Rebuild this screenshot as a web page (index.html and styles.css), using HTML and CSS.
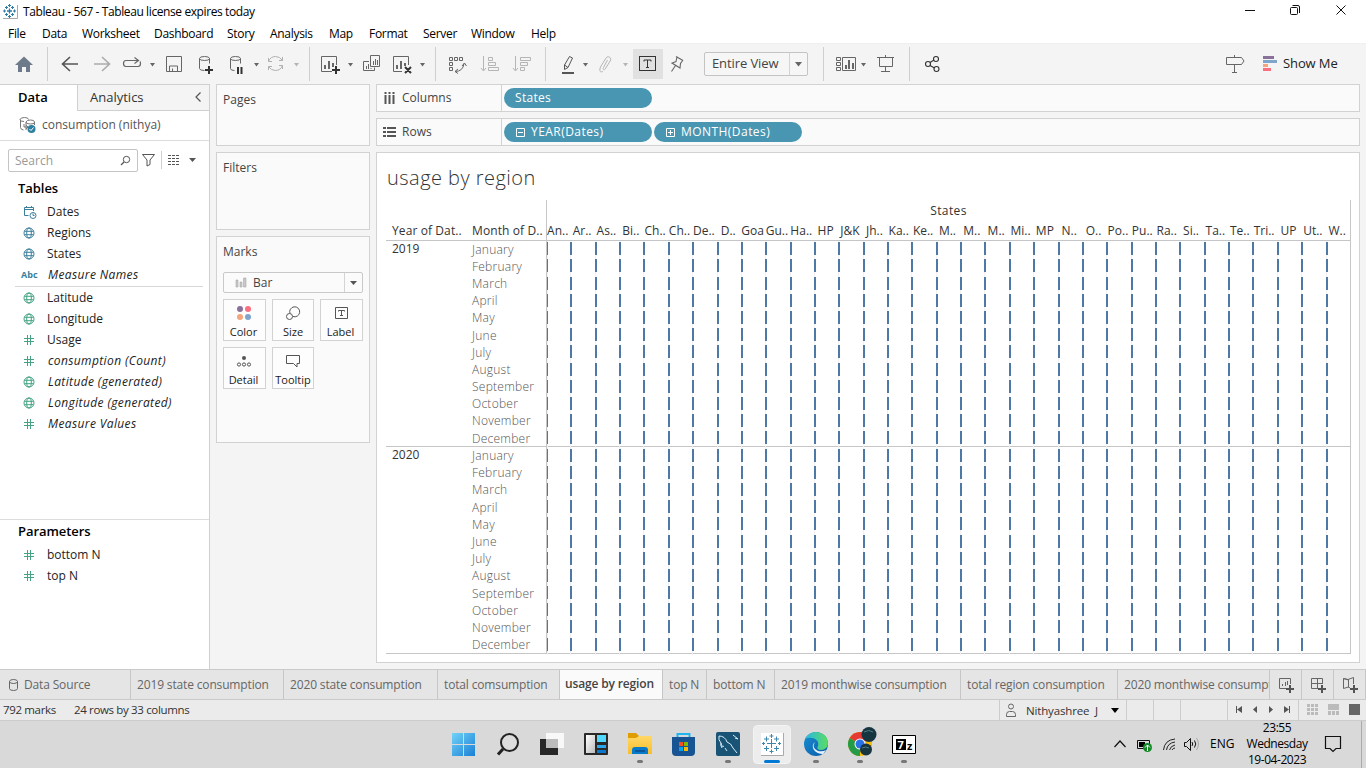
FILE: index.html
```html
<!DOCTYPE html>
<html lang="en">
<head>
<meta charset="utf-8">
<title>Tableau - 567</title>
<link rel="stylesheet" href="styles.css">
</head>
<body>
<svg class="defs" width="0" height="0">
  <symbol id="globe" viewBox="0 0 12 12"><g fill="none" stroke="currentColor"><circle cx="6" cy="6" r="5"/><ellipse cx="6" cy="6" rx="2.3" ry="5"/><path d="M1.5 4.3h9M1.5 7.7h9"/></g></symbol>
  <symbol id="hash" viewBox="0 0 12 12"><path d="M4.5 1v10M7.5 1v10M1 4.5h10M1 7.5h10" fill="none" stroke="currentColor"/></symbol>
  <symbol id="cal" viewBox="0 0 14 14"><g fill="none" stroke="currentColor"><path d="M5.500 10.500H1.500v-8h9V6M1 4.500h10M3.500 1v2M8.500 1v2"/><circle cx="10" cy="10.500" r="3"/><path d="M10 8.500v2h1.500"/></g></symbol>
</svg>
<div class="app">
  <header class="titlebar">
    <svg class="logo" width="18" height="19" viewBox="0 0 18 19"><path d="M3 18.500h14.500V5" fill="none" stroke="#aaa"/><path d="M3 4h14v14H3z" fill="#fff"/><g stroke="#2e7ba3" fill="none"><path stroke-width="1.300" d="M9.500 8.500v5M7 11h5"/><path d="M9.500 4v3M8 5.500h3M9.500 15v3M8 16.500h3M4.500 9.500v3M3 11h3M14.500 9.500v3M13 11h3M6.500 6v3M5 7.500h3M12.500 6v3M11 7.500h3M6.500 13v3M5 14.500h3M12.500 13v3M11 14.500h3"/></g></svg>
    <span class="window-title">Tableau - 567 - Tableau license expires today</span>
    <svg class="window-buttons" width="136" height="23" viewBox="1230 0 136 23"><g fill="none" stroke="#111"><path d="M1245 10.500h10"/><rect x="1290.500" y="7.500" width="7" height="7" rx="1"/><path d="M1292.500 5.500h5.500q1.500 0 1.500 1.500v6"/><path d="M1336.500 5.500l9 9M1345.500 5.500l-9 9"/></g></svg>
  </header>
  <nav class="menu"><span>File</span><span>Data</span><span>Worksheet</span><span>Dashboard</span><span>Story</span><span>Analysis</span><span>Map</span><span>Format</span><span>Server</span><span>Window</span><span>Help</span></nav>

  <div class="toolbar">
    <svg width="56" height="41" viewBox="0 43 56 41"><path d="M15 65l9-8.500 9 8.500h-3v7h-4v-5h-4v5h-4v-7z" fill="#6d7a8a"/><path class="sep" d="M47.500 47v34"/></svg>
    <svg width="104" height="41" viewBox="56 43 104 41"><g fill="none"><path d="M78 64H63M70 57l-7.500 7 7.500 7" stroke="#555" stroke-width="1.600"/><path d="M94 64h15M102 57l7.500 7-7.500 7" stroke="#aaa" stroke-width="1.600"/><path d="M138 60.500h-12q-2.500 0-2.500 3t2.500 3h12q2.500 0 2.500-3 0-1.500-.5-2M134.500 57.500l4 3-4 3" stroke="#666" stroke-width="1.200"/></g><path class="caret" d="M150 63h5l-2.500 3.500z"/></svg>
    <svg width="149" height="41" viewBox="160 43 149 41"><g fill="none" stroke="#666"><path d="M166.500 56.500h15v15h-15zM169.500 71v-5h8v5M172.500 71v-2.500"/><path d="M199.500 58.500q0-2 5-2t5 2-5 2-5-2zv10q0 2 5 2M209.500 58.500v5M230.500 58.500q0-2 5-2t5 2-5 2-5-2zv10q0 2 4 2M240.500 58.500v5"/></g><path d="M205 70h8M209 66v8" stroke="#333" stroke-width="2"/><path d="M238 67v7M241.500 67v7" stroke="#333" stroke-width="2"/><path class="caret" d="M254 63h5l-2.500 3.500z"/><path d="M268.500 61.500q2-5 7-5 4.500 0 7 4M282.500 65.500q-2 5-7 5-4.500 0-7-4M268.500 58v3.500h3.500M279 60.500h3.500V57M282.500 69v-3.500H279M268.500 70v-3.500h3.500" fill="none" stroke="#b0b0b0"/><path class="caret off" d="M294 63h5l-2.500 3.500z"/></svg>
    <svg width="126" height="41" viewBox="309 43 126 41"><path class="sep" d="M309.500 47v34"/><g fill="none" stroke="#666"><path d="M332 71.500h-10.500v-15h15V65M369 61.500h-5.500v9h11v-3M370.500 55.500h9v11h-9zM366.500 66v3M368.500 64v5M371 68v1M402 71.500h-8.500v-15h15V65"/></g><path d="M324 65h2v4h-2zM328 61h2v8h-2zM332 63h2v4h-2zM373 61h1v4h-1zM375 59h1v6h-1zM377 60h1v5h-1zM396 65h2v4h-2zM400 61h2v8h-2zM404 63h2v3h-2z" fill="#666"/><path d="M332 70h8M336 66v8M405 67l6 6M411 67l-6 6" stroke="#333" stroke-width="2"/><path class="caret" d="M348 63h5l-2.500 3.500zM420 63h5l-2.500 3.500z"/></svg>
    <svg width="110" height="41" viewBox="435 43 110 41"><path class="sep" d="M435.500 47v34"/><g fill="none" stroke="#666"><path d="M449.500 57.500h3v3h-3zM454.500 57.500h3v3h-3zM459.500 57.500h3v3h-3zM449.500 62.500h3v3h-3zM449.500 67.500h3v3h-3zM455 71.500q8 0 9-8M462 66l2.500-3 2 3M458 69l-3 2.500 3 2"/></g><g fill="none" stroke="#b5b5b5"><path d="M483.500 56v14M481 68l2.500 3 2.500-3M488.500 57.500h4v3h-4zM488.500 62.500h7v3h-7zM488.500 67.500h10v3h-10zM515.500 56v14M513 68l2.500 3 2.500-3M520.500 57.500h10v3h-10zM520.500 62.500h7v3h-7zM520.500 67.500h4v3h-4z"/></g></svg>
    <svg width="88" height="41" viewBox="545 43 88 41"><path class="sep" d="M545.500 47v34"/><path d="M569.500 56.500l3 1.500-4.500 9.500-3.500 2v-4.500zM564.500 65l3.500 2.500" fill="none" stroke="#555"/><path d="M562 73h12" stroke="#555" stroke-width="2"/><path class="caret" d="M583 63h5l-2.500 3.500z"/><path d="M607.500 60l-4 7.500c-1 2 .5 3 1.700 1.500l5-8c2-3-2-6-4.200-3l-5.500 9c-2 5 1 6 2.500 4" fill="none" stroke="#b5b5b5"/><path class="caret off" d="M623 63h5l-2.500 3.500z"/></svg>
    <svg width="71" height="41" viewBox="633 43 71 41"><path d="M633 49h30v30h-30z" fill="#e1e1e1"/><rect x="639.500" y="56.500" width="16" height="14" fill="none" stroke="#333"/><path d="M644 61.500v-1.500h7v1.500M647.500 60v7.500M646 67.500h3" fill="none" stroke="#333"/><path d="M676 56.500l7 4M677 57l-1 4.500-4 1.500 8 5 .5-4.500 2.500-3.500M675.500 65.500l-4 6" fill="none" stroke="#666" stroke-width="1.100"/></svg>
    <div class="fit-select"><span>Entire View</span><svg width="18" height="22" viewBox="0 0 18 22"><path d="M.5 0v22" stroke="#d4d4d4"/><path d="M6 9h7l-3.500 4.500z" fill="#666"/></svg></div>
    <svg width="392" height="41" viewBox="808 43 392 41"><path class="sep" d="M823.500 47v34M909.500 47v34"/><g fill="none" stroke="#666"><path d="M836.500 57.500h4v3h-4zM836.500 62.500h4v3h-4zM836.500 67.500h4v3h-4zM842.500 57.500h13v13h-13zM877 57.500h17M879.500 57v9.500h13V57M885.500 67v4M881 71.500h9M885.500 55v2"/></g><path d="M845 65h2v4h-2zM848 60h2v9h-2zM852 63h2v6h-2z" fill="#666"/><path class="caret" d="M861 63h5l-2.500 3.500z"/><g fill="none" stroke="#333" stroke-width="1.100"><circle cx="928" cy="64" r="2.500"/><circle cx="936" cy="59" r="2.500"/><circle cx="936.500" cy="69" r="2.500"/><path d="M930 62.500l4-2.500M930 65.500l4.500 2.500"/></g></svg>
    <svg width="166" height="41" viewBox="1200 43 166 41"><path d="M1226.500 57.500h15l2.500 3.500-2.500 3.500h-15zM1234.500 55v2M1234.500 65v7M1232 72.500h5" fill="none" stroke="#666"/><path d="M1263 56h11v3h-11z" fill="#8a7199"/><path d="M1263 60h14v3h-14z" fill="#7fa5cd"/><path d="M1263 64h5v3h-5z" fill="#f5a57d"/><path d="M1263 68h8v3h-8z" fill="#fb6f80"/><text class="show-me" x="1283" y="68">Show Me</text></svg>
  </div>

  <main class="work">
    <aside class="data-pane">
      <div class="pane-tabs"><b>Data</b><span>Analytics</span><svg width="8" height="12" viewBox="0 0 8 12"><path d="M6.500 1.500L2 6l4.500 4.500" fill="none" stroke="#555" stroke-width="1.200"/></svg></div>
      <div class="source"><svg width="18" height="18" viewBox="0 0 18 18"><g fill="none" stroke="#777"><path d="M9.500 3.500q0-2-4-2t-4.500 2 4 2M1.500 3.500v8q0 2 3 2.500M15.500 6q0-2-4-2t-4.500 2 4.500 2 4-2zM7 6v8M15.500 6v3M5 8v3h4M7 9l2 2-2 2"/></g><circle cx="12.500" cy="13" r="4" fill="#2f7f9f"/><path d="M10.500 13l1.500 1.500 2.500-3" stroke="#fff" fill="none"/></svg><span>consumption (nithya)</span></div>
      <div class="search-row">
        <div class="search"><span>Search</span><svg width="11" height="11" viewBox="0 0 11 11"><circle cx="6.500" cy="4.500" r="3.200" fill="none" stroke="#555"/><path d="M4 7L1 10" stroke="#555" stroke-width="1.300"/></svg></div>
        <svg width="60" height="24" viewBox="140 149 60 24"><path d="M142.500 154.500h12l-4.500 5.500v4.500l-3 1.500v-6z" fill="none" stroke="#555"/><path class="sep" d="M161.500 151v18"/><path d="M168 155.500h12M168 158.500h12M168 161.500h12M168 164.500h12" stroke="#555" stroke-dasharray="3 1"/><path d="M189 158h7l-3.500 4z" fill="#555"/></svg>
      </div>
      <h3>Tables</h3>
      <ul class="fields dims">
        <li><svg class="cal"><use href="#cal"/></svg>Dates</li><li><svg><use href="#globe"/></svg>Regions</li><li><svg><use href="#globe"/></svg>States</li><li><b class="abc">Abc</b><i>Measure Names</i></li>
      </ul>
      <ul class="fields meas">
        <li><svg><use href="#globe"/></svg>Latitude</li><li><svg><use href="#globe"/></svg>Longitude</li><li><svg><use href="#hash"/></svg>Usage</li><li><svg><use href="#hash"/></svg><i>consumption (Count)</i></li><li><svg><use href="#globe"/></svg><i>Latitude (generated)</i></li><li><svg><use href="#globe"/></svg><i>Longitude (generated)</i></li><li><svg><use href="#hash"/></svg><i>Measure Values</i></li>
      </ul>
      <section class="params"><h3>Parameters</h3>
        <ul class="fields"><li><svg><use href="#hash"/></svg>bottom N</li><li><svg><use href="#hash"/></svg>top N</li></ul>
      </section>
    </aside>

    <div class="cards">
      <section class="card pages">Pages</section>
      <section class="card filters">Filters</section>
      <section class="card marks"><span>Marks</span>
        <div class="mark-type"><svg width="12" height="11" viewBox="0 0 12 11"><path d="M1 3h2v7H1zM5 5h2v5H5zM8.500 1H11v9H8.500z" fill="#c8c8c8" stroke="#aaa" stroke-width=".6"/></svg><span>Bar</span><svg class="drop" width="18" height="19" viewBox="0 0 18 19"><path d="M.5 0v19" stroke="#d4d4d4"/><path d="M6 8h7l-3.500 4z" fill="#555"/></svg></div>
        <div class="mark-buttons">
          <div><svg viewBox="0 0 16 16"><circle cx="4" cy="4" r="3" fill="#8a7199"/><circle cx="12" cy="4" r="3" fill="#fb6f80"/><circle cx="4" cy="12" r="3" fill="#f5a57d"/><circle cx="12" cy="12" r="3" fill="#7fa5cd"/></svg>Color</div>
          <div><svg viewBox="0 0 16 16"><g fill="none" stroke="#555"><path d="M5 8.500A5 5 0 1 1 8 11.500"/><circle cx="4.500" cy="11.500" r="3"/></g></svg>Size</div>
          <div><svg viewBox="0 0 16 16"><g fill="none" stroke="#555"><path d="M2.500 2.500h12v11h-12zM5.500 6.500v-1h6v1M8.500 5.500v5M7 10.500h3"/></g></svg>Label</div>
          <div><svg viewBox="0 0 16 16"><circle cx="8" cy="5" r="2" fill="#555"/><g fill="none" stroke="#555"><circle cx="3" cy="11.500" r="1.600"/><circle cx="8" cy="11.500" r="1.600"/><circle cx="13" cy="11.500" r="1.600"/></g></svg>Detail</div>
          <div><svg viewBox="0 0 16 16"><path d="M1.500 2.500h13v8h-2.500v3.500l-3.500-3.500h-7z" fill="none" stroke="#555"/></svg>Tooltip</div>
        </div>
      </section>
    </div>

    <div class="sheet">
      <div class="shelf"><div class="shelf-name"><svg width="13" height="13" viewBox="0 0 13 13"><path d="M2.500 0v2M6.500 0v2M10.500 0v2M2.500 3v9M6.500 3v9M10.500 3v9" stroke="#555" stroke-width="2"/></svg>Columns</div><div class="pill">States</div></div>
      <div class="shelf"><div class="shelf-name"><svg width="13" height="13" viewBox="0 0 13 13"><path d="M0 2h3M0 6h3M0 10h3M4 2h9M4 6h9M4 10h9" stroke="#555" stroke-width="2"/></svg>Rows</div>
        <div class="pill date"><svg width="9" height="9" viewBox="0 0 9 9"><path d="M.5.5h8v8h-8zM2 4.500h5" fill="none" stroke="#fff"/></svg>YEAR(Dates)</div>
        <div class="pill date"><svg width="9" height="9" viewBox="0 0 9 9"><path d="M.5.5h8v8h-8zM2 4.500h5M4.500 2v5" fill="none" stroke="#fff"/></svg>MONTH(Dates)</div></div>
      <section class="viz">
        <h1>usage by region</h1>
        <div class="table">
          <div class="head">
            <div class="row-titles"><span>Year of Dat..</span><span>Month of D..</span></div>
            <div class="col-titles"><div class="dimension">States</div><div class="states" id="states"></div></div>
          </div>
          <div id="years"></div>
        </div>
      </section>
    </div>
  </main>

  <div class="tabs">
    <div class="src"><svg width="11" height="14" viewBox="0 0 11 14"><path d="M1.500 3.500q0-2 4-2t4 2-4 2-4-2zv7q0 2 4 2t4-2v-7" fill="none" stroke="#666"/></svg>Data Source</div><div>2019 state consumption</div><div>2020 state consumption</div><div>total comsumption</div><div class="active">usage by region</div><div>top N</div><div>bottom N</div><div>2019 monthwise consumption</div><div>total region consumption</div><div>2020 monthwise consumption</div>
    <div class="new"><svg width="17" height="17" viewBox="0 0 17 17"><path d="M8 12.500H1.500v-10h11V8M4.500 8v2M7.500 6v4M9.500 5v4" fill="none" stroke="#666"/><path d="M8 13h8M12 9v8" stroke="#555" stroke-width="2"/></svg></div>
    <div class="new"><svg width="17" height="17" viewBox="0 0 17 17"><path d="M8 12.500H1.500v-10h11V8M7.500 2v10M1 7.500h11" fill="none" stroke="#666"/><path d="M8 13h8M12 9v8" stroke="#555" stroke-width="2"/></svg></div>
    <div class="new"><svg width="17" height="17" viewBox="0 0 17 17"><path d="M8 12l-1.500-1-5 1.500v-10L6 3.500l5.500-2V8M6.500 3.500v8M1.500 2.500L6.500 4" fill="none" stroke="#666"/><path d="M8 13h8M12 9v8" stroke="#555" stroke-width="2"/></svg></div>
  </div>

  <div class="status"><span class="count">792 marks</span><span class="dims-count">24 rows by 33 columns</span>
    <div class="user"><svg width="12" height="15" viewBox="0 0 12 15"><circle cx="6" cy="3.500" r="2.500" fill="none" stroke="#666"/><path d="M1.500 13.500v-2q0-3 3-3h3q3 0 3 3v2z" fill="none" stroke="#666"/></svg><span>Nithyashree&nbsp; J</span><svg class="drop" width="8" height="5" viewBox="0 0 8 5"><path d="M0 0h8L4 5z"/></svg></div>
    <svg width="240" height="20" viewBox="1126 700 240 20"><path d="M1126.500 700v20M1153.500 700v20M1180.500 700v20M1227.500 700v20M1298.500 700v20" stroke="#ccc"/><path d="M1236 706h1v7h-1zM1242 706v7l-5-3.500zM1257 706v7l-4-3.500zM1269 706v7l4-3.500zM1284 706v7l5-3.500zM1289 706h1v7h-1z" fill="#555"/><path d="M1307 705.500h11M1307 709.500h11M1307 713.500h11" stroke="#bbb" stroke-width="3" stroke-dasharray="3 1"/><path d="M1328 704h11v6h-11zM1328 711h3v4h-3zM1332 711h3v4h-3zM1336 711h3v4h-3z" fill="#bbb"/><path d="M1349 704h11v11h-11z" fill="#666"/></svg>
  </div>

  <footer class="taskbar">
    <svg class="apps" width="510" height="47" viewBox="430 721 510 47">
      <defs><linearGradient id="win" x2="1" y2="1"><stop stop-color="#70d3f8"/><stop offset="1" stop-color="#1b7fd6"/></linearGradient><linearGradient id="edge" x2="1" y2="1"><stop stop-color="#1791d4"/><stop offset="1" stop-color="#0d58a5"/></linearGradient><linearGradient id="green" x2="1" y2="0"><stop stop-color="#29b9e4"/><stop offset="1" stop-color="#5bdc61"/></linearGradient><linearGradient id="fold" y2="1" x2="0"><stop stop-color="#ffd867"/><stop offset="1" stop-color="#f9bd2a"/></linearGradient><linearGradient id="pane" x2="1" y2="1"><stop stop-color="#fff"/><stop offset="1" stop-color="#bbb"/></linearGradient></defs>
      <path d="M452 733h11v11h-11zM464 733h11v11h-11zM452 745h11v11h-11zM464 745h11v11h-11z" fill="url(#win)"/>
      <circle cx="509.500" cy="742.500" r="8.500" fill="#ddd" stroke="#222" stroke-width="2"/><path d="M503 749l-5 5.500" stroke="#222" stroke-width="3"/>
      <path d="M540 739h18v16h-18z" fill="#272727"/><path d="M546 733h18v15h-18z" fill="#f8f8f8"/><path d="M546 739h12v9h-12z" fill="#bcbcbc"/>
      <rect x="584" y="733" width="24" height="22" rx="1" fill="#292929"/><path d="M586 735h9v18h-9z" fill="url(#pane)"/><path d="M597 735h9v7h-9z" fill="#50d8ff"/><path d="M597 745h9v3h-9z" fill="#28a8ea"/><path d="M597 750h9v3h-9z" fill="#0b78d0"/>
      <path d="M628 733h8l3 3h13v18h-24z" fill="#df9d00"/><path d="M628 738h8l3-2h13v18h-24z" fill="url(#fold)"/><path d="M632 754v-4q0-3 3-3h10q3 0 3 3v4z" fill="#087acb"/><path d="M635 751h10" stroke="#0a579b" stroke-width="2"/>
      <path d="M677.500 738v-4h12v4" fill="none" stroke="#1fb5ef" stroke-width="2"/><path d="M672 737h23v15q0 4-4 4h-15q-4 0-4-4z" fill="#185494"/><path d="M679 742h4v4h-4z" fill="#f25022"/><path d="M684 742h4v4h-4z" fill="#7fba00"/><path d="M679 747h4v4h-4z" fill="#00a4ef"/><path d="M684 747h4v4h-4z" fill="#ffb900"/>
      <rect x="716" y="732" width="24" height="24" rx="2" fill="#195477"/><path d="M722 748q-2-3-1-5-3-3-2-7 6 0 8 6 4 1 6 6l4 5M721 743q1 5 3 3M725 748l2 3M733 735l5 4-3-1" fill="none" stroke="#d8eaf3"/>
      <rect x="753.500" y="725.500" width="37" height="38" rx="4" fill="#ededed" stroke="#f4f4f4"/><path d="M761 733h22v22h-22z" fill="#fff"/><path d="M761 755.500h22.500V733" fill="none" stroke="#aaa"/><g stroke="#3f86ab"><path d="M771.500 739v9M767 743.500h9"/><path d="M771.500 734v4M769.500 736h4M771.500 749.500v4M769.500 751.500h4M763.500 742v3M762 743.500h3M779.500 742v3M778 743.500h3M766.500 736.500v5M764 739h5M776.500 736.500v5M774 739h5M766.500 746v5M764 748.500h5M776.500 746v5M774 748.500h5"/></g>
      <circle cx="816" cy="744" r="12" fill="url(#edge)"/><path d="M805 739q4-7 11-7 12 1 12 12-1 6-8 6-4-1-2-4c2-7-7-10-13-7z" fill="url(#green)"/><path d="M815 742q-4 6 3 9 5 1 8-1l-3 4q-6 0-9-4-3-5 1-8z" fill="#e4f2fa"/>
      <circle cx="860" cy="744" r="12" fill="#fbbc05"/><path d="M860 744l-10.400-6a12 12 0 0 1 20.800 0z" fill="#e53932"/><path d="M860 744l-10.400-6a12 12 0 0 0 10.400 18z" fill="#249b48"/><circle cx="860" cy="744" r="5.500" fill="#fff"/><circle cx="860" cy="744" r="4.500" fill="#2873e8"/><circle cx="869" cy="734.500" r="7.500" fill="#173540"/><circle cx="866" cy="749.500" r="6" fill="#173540"/><path d="M864 732q5-3 9 0M862 748q4-2 7 0" stroke="#4c7e85" fill="none"/>
      <path d="M892.500 735.500h23v18h-23z" fill="#fff" stroke="#000"/><path d="M896 739h10v11h-10z"/><text x="897.500" y="749" font-size="11" font-weight="700" fill="#fff">7</text><text x="907" y="750" font-size="11" font-weight="700">z</text>
      <g fill="#777"><rect x="637" y="760" width="6" height="3" rx="1.500"/><rect x="725" y="760" width="6" height="3" rx="1.500"/><rect x="813" y="760" width="6" height="3" rx="1.500"/><rect x="857" y="760" width="6" height="3" rx="1.500"/><rect x="901" y="760" width="6" height="3" rx="1.500"/></g><rect x="764" y="760" width="16" height="3" rx="1.500" fill="#0078d4"/>
    </svg>
    <svg width="90" height="47" viewBox="1110 721 90 47"><path d="M1114.500 747l5.500-6 5.500 6" fill="none" stroke="#111" stroke-width="1.200"/><path d="M1137.500 740.500h12v8h-12z" fill="none" stroke="#111"/><path d="M1139 742h6v5h-6z"/><circle cx="1147.500" cy="747.500" r="4.500" fill="#138a25"/><path d="M1147.500 751v-6M1145 747.500l2.500-2.500 2.500 2.500" stroke="#fff" fill="none"/><path d="M1163.500 750q1-10 11.500-11M1166.500 750q1-7 8.500-8M1169.500 750q1-4 5.500-5M1172 750q1-2 3-2" fill="none" stroke="#222"/><path d="M1184.500 742.500h2l4-4v12l-4-4h-2zM1192 742q1.500 2 0 4M1194.500 740.500q2.500 3.500 0 7" fill="none" stroke="#111"/><path d="M1196.500 738q4 6 0 12" fill="none" stroke="#aaa"/></svg>
    <span class="lang">ENG</span>
    <div class="clock"><span>23:55</span><span>Wednesday</span><span>19-04-2023</span></div>
    <svg width="56" height="47" viewBox="1310 721 56 47"><path d="M1325.500 736.500h15v12h-4.500l-3 3-3-3h-4.500z" fill="none" stroke="#111" stroke-width="1.200"/><path d="M1361.500 720v48" stroke="#aaa"/></svg>
  </footer>
</div>
<script src="grid.js"></script>
</body>
</html>
```
FILE: styles.css
```css
* { box-sizing: border-box; }
body { margin: 0; font: 12px/16px "Open Sans", "Noto Sans", sans-serif; color: #333; background: #f4f4f4; }
svg { display: block; flex: none; overflow: hidden; }
.defs { position: absolute; }
ul, h1, h3 { margin: 0; padding: 0; list-style: none; }
.app { width: 1366px; height: 768px; overflow: hidden; display: grid; grid-template-rows: 23px 20px 41px 585px 31px 21px 47px; white-space: nowrap; }
.titlebar { background: #fff; display: flex; align-items: flex-start; color: #000; }
.window-title { padding: 4px 0 0 5px; letter-spacing: -.4px; }
.window-buttons { margin-left: auto; }
.menu { background: #fff; color: #000; display: grid; grid-template-columns: 34px 40px 72px 73px 43px 59px 40px 54px 48px 60px 60px; padding: 3px 0 0 8px; letter-spacing: -.3px; }
.toolbar { display: flex; border-top: 1px solid #f0f0f0; }
.toolbar > svg { margin-top: -1px; }
.sep { stroke: #cfcfcf; fill: none; }
.caret { fill: #666; }
.caret.off { fill: #b5b5b5; }
.fit-select { width: 104px; height: 24px; margin-top: 8px; border: 1px solid #c4c4c4; border-radius: 2px; display: flex; justify-content: space-between; padding-left: 7px; font-size: 13px; line-height: 21px; color: #444; background: #f6f6f6; letter-spacing: -.1px; }
.show-me { font-size: 13px; fill: #222; letter-spacing: -.1px; }

.work { display: grid; grid-template-columns: 210px 160px 990px; }
.data-pane { background: #fff; border-right: 1px solid #d0d0d0; border-top: 1px solid #d0d0d0; display: flex; flex-direction: column; color: #222; }
.pane-tabs { height: 26px; display: flex; font-size: 13px; line-height: 25px; }
.pane-tabs b { width: 77px; padding-left: 18px; color: #000; font-weight: 600; }
.pane-tabs span { flex: 1; background: #f4f4f4; border: solid #d0d0d0; border-width: 0 0 1px 1px; padding-left: 12px; color: #333; }
.pane-tabs svg { margin-left: -15px; margin-top: 6px; margin-right: 7px; }
.source { height: 30px; display: flex; align-items: center; padding: 0 0 1px 19px; gap: 5px; color: #555; border-bottom: 1px solid #ddd; }
.search-row { display: flex; height: 37px; padding: 8px 0 0 8px; gap: 2px; }
.search { width: 130px; height: 23px; border: 1px solid #c4c4c4; border-radius: 2px; display: flex; justify-content: space-between; align-items: center; padding: 0 6px; color: #999; }
h3 { font-size: 13px; line-height: 18px; font-weight: 600; color: #000; padding-left: 18px; letter-spacing: -.05px; }
.data-pane > h3 { margin-top: 1px; }
.fields li { height: 21px; display: grid; grid-template-columns: 24px 1fr; align-items: center; padding-left: 23px; color: #222; }
.fields i { letter-spacing: .38px; padding-left: 1px; }
.fields svg { width: 12px; height: 12px; color: #43a382; }
.fields .cal { width: 14px; height: 14px; }
.fields.dims svg, .abc { color: #3a7f9d; }
.abc { font-size: 9px; margin-left: -2px; }
.dims { margin-top: 4px; }
.meas { margin: 1px 6px 0 15px; border-top: 1px solid #d6d6d6; }
.meas li { padding-left: 8px; }
.params { margin-top: auto; height: 150px; border-top: 1px solid #ddd; padding-top: 2px; }
.params ul { margin-top: 4px; }

.cards { padding: 0 0 0 6px; display: flex; flex-direction: column; gap: 6px; }
.card { width: 154px; border: 1px solid #d2d2d2; background: #fafafa; padding: 7px 6px; color: #444; }
.pages { height: 62px; } .filters { height: 78px; } .marks { height: 207px; }
.mark-type { display: flex; align-items: center; height: 21px; border: 1px solid #c9c9c9; border-radius: 2px; margin-top: 12px; padding-left: 11px; gap: 6px; background: #fbfbfb; }
.mark-type .drop { margin-left: auto; }
.mark-buttons { display: grid; grid-template-columns: 43px 42px 43px; gap: 6px; margin-top: 6px; }
.mark-buttons div { height: 42px; border: 1px solid #d2d2d2; background: #fdfdfd; text-align: center; color: #222; padding: 5px 2px 0 0; font-size: 11px; }
.mark-buttons div:nth-child(3n+2) { padding-right: 0; }
.mark-buttons svg { width: 16px; height: 16px; margin: 0 auto 3px; }

.sheet { display: flex; flex-direction: column; gap: 6px; padding-left: 6px; }
.shelf { width: 984px; height: 28px; border: 1px solid #d2d2d2; background: #fafafa; display: flex; align-items: center; gap: 2px; }
.shelf-name { width: 125px; height: 26px; border-right: 1px solid #d2d2d2; padding-left: 6px; display: flex; align-items: center; gap: 6px; color: #444; }
.pill { width: 148px; height: 20px; border-radius: 10px; background: #4996b2; color: #fff; padding-left: 11px; display: flex; align-items: center; gap: 6px; letter-spacing: .3px; }
.pill.date { padding-left: 12px; letter-spacing: .45px; }
.pill svg { margin-top: 1px; }
.viz { width: 984px; height: 511px; border: 1px solid #d2d2d2; background: #fff; }
h1 { font-size: 20px; font-weight: 300; line-height: 28px; color: #333; padding: 11px 0 0 10px; height: 47px; letter-spacing: .47px; }
.table { width: 965px; margin-left: 9px; }
.head { height: 41px; display: flex; }
.row-titles { width: 160px; display: grid; grid-template-columns: 80px 80px; padding: 23px 0 0 6px; border-bottom: 1px solid #c6c6c6; letter-spacing: .1px; }
.col-titles { width: 805px; border: solid #c6c6c6; border-width: 0 1px 1px 1px; padding-top: 3px; text-align: center; }
.dimension { letter-spacing: .4px; }
.states { display: grid; grid-template-columns: repeat(33, 24.360px); margin: 4px 0 0 -1px; }
.states span { display: flex; justify-content: center; min-width: 0; padding-right: 1px; }
.year { height: 206.400px; border-bottom: 1px solid #c6c6c6; display: grid; grid-template-columns: 80px 80px 805px; }
.year-name { padding-left: 6px; margin-top: -1px; }
.months { padding-left: 6px; color: #555; font-weight: 300; letter-spacing: .25px; margin-top: -.4px; }
.months div, .year-name div { height: 17.200px; line-height: 17px; }
.plot { border-left: 1px solid #c6c6c6; border-right: 1px solid #c6c6c6; display: grid; grid-template-columns: repeat(33, 24.360px); height: 206px; }
.col { margin-left: -1px; width: 2px; background: linear-gradient(90deg, #f1f1f1 1px, transparent 1px); padding-top: 1.200px; }
.col i { display: block; height: 13px; margin-bottom: 4.200px; background: #4e79a7; }
.col:first-child { width: 1px; margin-left: 0; }

.tabs { display: grid; grid-template-columns: 131px 153px 154px 122px 103px 44px 68px 186px 157px 152px 32px 32px 32px; background: #e5e5e5; border-top: 1px solid #cacaca; border-bottom: 1px solid #cacaca; letter-spacing: -.15px; }
.tabs div { border-right: 1px solid #c6c6c6; padding-left: 6px; line-height: 30px; color: #666; overflow: hidden; }
.tabs .src { display: flex; align-items: center; gap: 5px; padding-left: 8px; }
.tabs .active { background: #fafafa; font-weight: 600; line-height: 27px; color: #444; padding-left: 5px; }
.tabs .new { padding: 6px 0 0 8px; }
.status { display: flex; background: #ebebeb; font-size: 11.500px; line-height: 19px; border-bottom: 1px solid #ccc; letter-spacing: -.35px; }
.count { width: 74px; padding-left: 3px; }
.dims-count { width: 925px; }
.user { width: 127px; border-left: 1px solid #ccc; display: flex; align-items: center; padding: 0 7px 0 5px; gap: 9px; letter-spacing: -.15px; }
.user .drop { margin-left: auto; }
.taskbar { background: #d9d9d9; display: flex; color: #000; }
.apps { margin-left: 430px; margin-right: 170px; font-family: "Open Sans", sans-serif; }
.lang { width: 44px; padding: 15px 0 0 10px; }
.clock { width: 66px; display: flex; flex-direction: column; align-items: center; letter-spacing: -.45px; margin-top: -1px; }
```
FILE: grid.js
```js
const months = ["January", "February", "March", "April", "May", "June", "July", "August", "September", "October", "November", "December"];
const states = "An.. Ar.. As.. Bi.. Ch.. Ch.. De.. D.. Goa Gu.. Ha.. HP J&K Jh.. Ka.. Ke.. M.. M.. M.. Mi.. MP N.. O.. Po.. Pu.. Ra.. Si.. Ta.. Te.. Tri.. UP Ut.. W..".split(" ");

const add = (parent, tag, cls, text) => {
  const el = document.createElement(tag);
  if (cls) el.className = cls;
  if (text) el.textContent = text;
  parent.append(el);
  return el;
};

states.forEach(s => add(document.getElementById("states"), "span", "", s));

["2019", "2020"].forEach(y => {
  const year = add(document.getElementById("years"), "div", "year");
  add(add(year, "div", "year-name"), "div", "", y);
  const list = add(year, "div", "months");
  months.forEach(m => add(list, "div", "", m));
  const plot = add(year, "div", "plot");
  states.forEach(() => {
    const col = add(plot, "div", "col");
    months.forEach(() => add(col, "i"));
  });
});
```
